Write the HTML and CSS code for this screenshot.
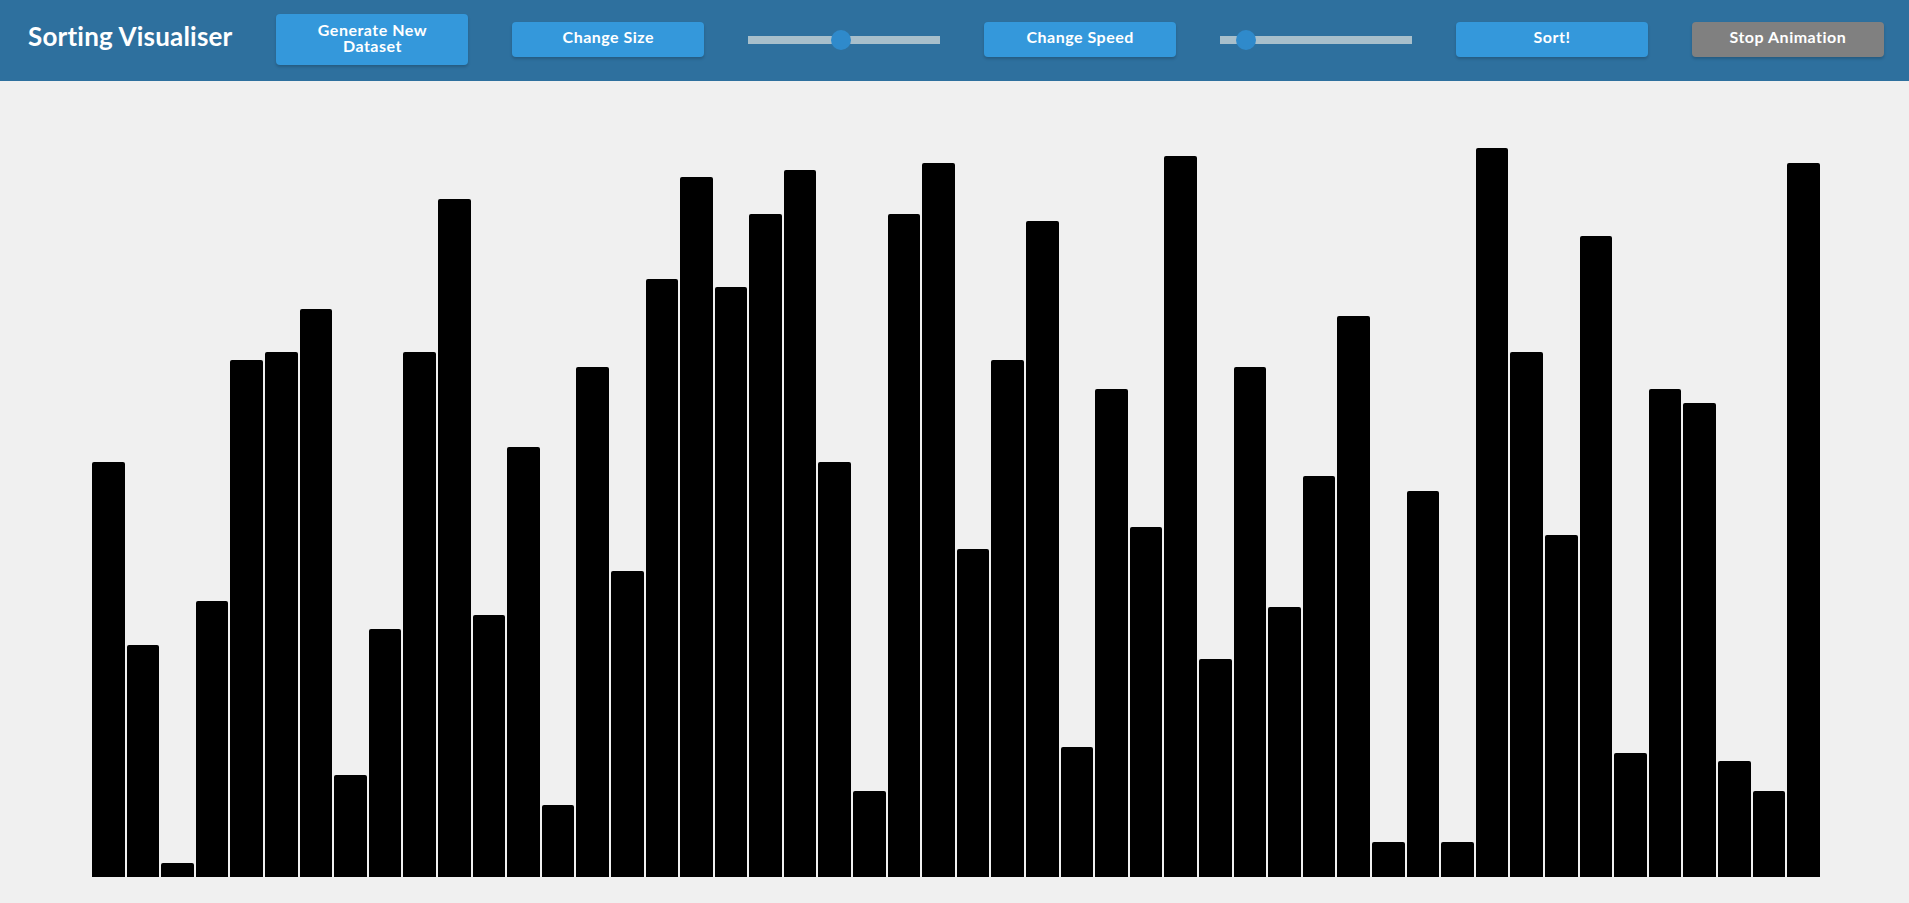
FILE: index.html
```html
<!DOCTYPE html>
<html>
<head>
  <meta charset="utf-8">
  <meta name="viewport" content="width=device-width">
  <title>Sorting Visualiser</title>
  <link rel="stylesheet" href="styles.css">
</head>
<body>
  <header class="toolbar">
    <h1 class="title">Sorting Visualiser</h1>
    <button class="btn btn-tall">Generate New<br>Dataset</button>
    <button class="btn">Change Size</button>
    <input class="slider" type="range" min="0" max="100" value="48">
    <button class="btn">Change Speed</button>
    <input class="slider" type="range" min="0" max="100" value="9">
    <button class="btn">Sort!</button>
    <button class="btn btn-stop">Stop Animation</button>
  </header>

  <main class="chart">
    <div class="bar" style="height:415px"></div>
    <div class="bar" style="height:232px"></div>
    <div class="bar" style="height:14px"></div>
    <div class="bar" style="height:276px"></div>
    <div class="bar" style="height:517px"></div>
    <div class="bar" style="height:525px"></div>
    <div class="bar" style="height:568px"></div>
    <div class="bar" style="height:102px"></div>
    <div class="bar" style="height:248px"></div>
    <div class="bar" style="height:525px"></div>
    <div class="bar" style="height:678px"></div>
    <div class="bar" style="height:262px"></div>
    <div class="bar" style="height:430px"></div>
    <div class="bar" style="height:72px"></div>
    <div class="bar" style="height:510px"></div>
    <div class="bar" style="height:306px"></div>
    <div class="bar" style="height:598px"></div>
    <div class="bar" style="height:700px"></div>
    <div class="bar" style="height:590px"></div>
    <div class="bar" style="height:663px"></div>
    <div class="bar" style="height:707px"></div>
    <div class="bar" style="height:415px"></div>
    <div class="bar" style="height:86px"></div>
    <div class="bar" style="height:663px"></div>
    <div class="bar" style="height:714px"></div>
    <div class="bar" style="height:328px"></div>
    <div class="bar" style="height:517px"></div>
    <div class="bar" style="height:656px"></div>
    <div class="bar" style="height:130px"></div>
    <div class="bar" style="height:488px"></div>
    <div class="bar" style="height:350px"></div>
    <div class="bar" style="height:721px"></div>
    <div class="bar" style="height:218px"></div>
    <div class="bar" style="height:510px"></div>
    <div class="bar" style="height:270px"></div>
    <div class="bar" style="height:401px"></div>
    <div class="bar" style="height:561px"></div>
    <div class="bar" style="height:35px"></div>
    <div class="bar" style="height:386px"></div>
    <div class="bar" style="height:35px"></div>
    <div class="bar" style="height:729px"></div>
    <div class="bar" style="height:525px"></div>
    <div class="bar" style="height:342px"></div>
    <div class="bar" style="height:641px"></div>
    <div class="bar" style="height:124px"></div>
    <div class="bar" style="height:488px"></div>
    <div class="bar" style="height:474px"></div>
    <div class="bar" style="height:116px"></div>
    <div class="bar" style="height:86px"></div>
    <div class="bar" style="height:714px"></div>
  </main>
</body>
</html>
```

FILE: styles.css
```css
* {
  box-sizing: border-box;
}
body {
  margin: 0;
  height: 903px;
  background: #f0f0f0;
  font-family: Lato, "Liberation Sans", sans-serif;
  display: flex;
  flex-direction: column;
  overflow: hidden;
}

/* top bar with the controls */
.toolbar {
  height: 81px;
  flex: none;
  background: #2e709e;
  display: flex;
  align-items: center;
  justify-content: space-between;
  padding: 0 25px 2px 28px;
}
.title {
  margin: 0 0 8px;
  color: #fff;
  font-size: 26px;
  font-weight: 700;
  letter-spacing: 0.2px;
}
.btn {
  width: 192px;
  padding: 7px 0 12px;
  border: none;
  border-radius: 4px;
  background: #3498db;
  color: #fff;
  font-family: inherit;
  font-size: 16px;
  font-weight: 700;
  line-height: 16px;
  letter-spacing: 0.5px;
  box-shadow: 0 2px 3px rgba(0, 0, 0, 0.18);
  cursor: pointer;
}
.btn-tall {
  padding: 8px 0 11px;
}
.btn-stop {
  background: #808080;
}

/* range inputs */
.slider {
  -webkit-appearance: none;
  appearance: none;
  width: 192px;
  height: 20px;
  margin: 0;
  background: transparent;
}
.slider::-webkit-slider-runnable-track {
  height: 8px;
  background: #a8bfcb;
}
.slider::-webkit-slider-thumb {
  -webkit-appearance: none;
  width: 20px;
  height: 20px;
  margin-top: -6px;
  border-radius: 50%;
  background: #2f8acb;
}

/* the array, one bar per value */
.chart {
  flex: 1;
  display: flex;
  align-items: flex-end;
  gap: 2px;
  padding: 0 89px 26px 92px;
}
.bar {
  flex: 1;
  background: #000;
  border-radius: 2px 2px 0 0;
}
```
